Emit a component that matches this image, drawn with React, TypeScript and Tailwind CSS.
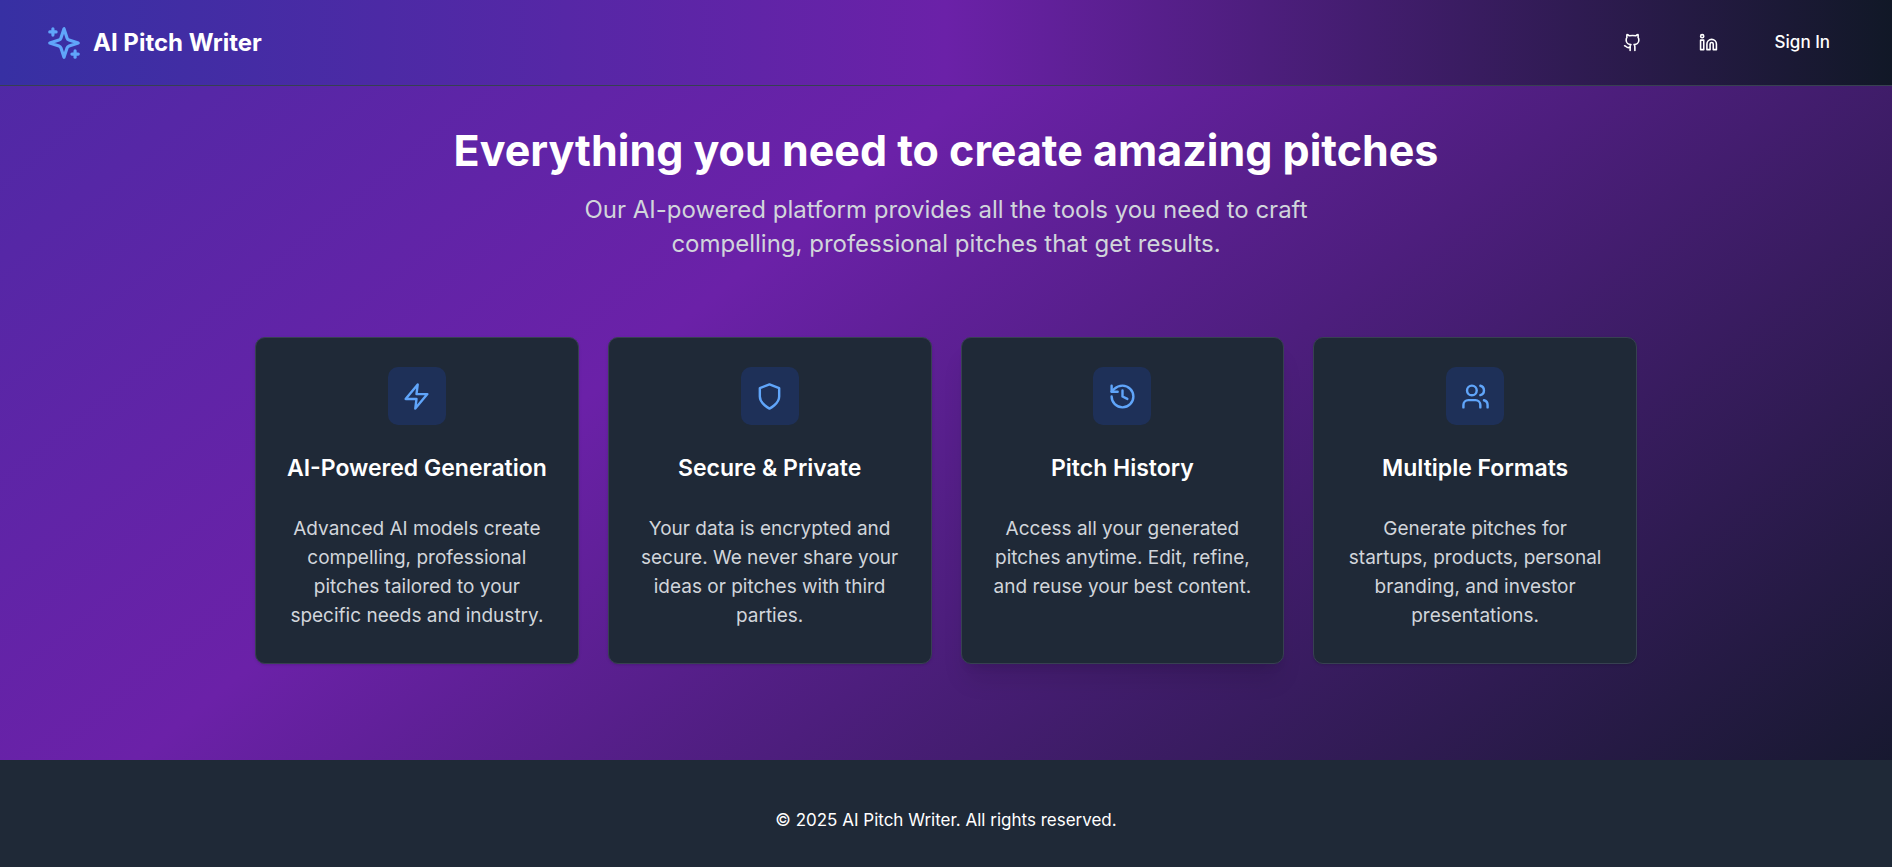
import type { ComponentType, ReactNode } from "react";
import { History, Users, Github, Linkedin } from "lucide-react";

interface IconProps {
  className?: string;
}

interface Feature {
  icon: ComponentType<IconProps>;
  title: string;
  text: string;
  raised?: boolean;
}

function LineIcon({ className, children }: IconProps & { children: ReactNode }) {
  return (
    <svg
      viewBox="0 0 24 24"
      className={className}
      fill="none"
      stroke="currentColor"
      strokeWidth="2"
      strokeLinecap="round"
      strokeLinejoin="round"
      aria-hidden="true"
    >
      {children}
    </svg>
  );
}

function Sparkles({ className }: IconProps) {
  return (
    <LineIcon className={className}>
      <path d="m12 3-1.912 5.813a2 2 0 0 1-1.275 1.275L3 12l5.813 1.912a2 2 0 0 1 1.275 1.275L12 21l1.912-5.813a2 2 0 0 1 1.275-1.275L21 12l-5.813-1.912a2 2 0 0 1-1.275-1.275L12 3Z" />
      <path d="M5 3v4" />
      <path d="M19 17v4" />
      <path d="M3 5h4" />
      <path d="M17 19h4" />
    </LineIcon>
  );
}

function Bolt({ className }: IconProps) {
  return (
    <LineIcon className={className}>
      <polygon points="13 2 3 14 12 14 11 22 21 10 12 10 13 2" />
    </LineIcon>
  );
}

function PlainShield({ className }: IconProps) {
  return (
    <LineIcon className={className}>
      <path d="M12 22s8-4 8-10V5l-8-3-8 3v7c0 6 8 10 8 10" />
    </LineIcon>
  );
}

const features: Feature[] = [
  {
    icon: Bolt,
    title: "AI-Powered Generation",
    text: "Advanced AI models create compelling, professional pitches tailored to your specific needs and industry.",
  },
  {
    icon: PlainShield,
    title: "Secure & Private",
    text: "Your data is encrypted and secure. We never share your ideas or pitches with third parties.",
  },
  {
    icon: History,
    title: "Pitch History",
    text: "Access all your generated pitches anytime. Edit, refine, and reuse your best content.",
    raised: true,
  },
  {
    icon: Users,
    title: "Multiple Formats",
    text: "Generate pitches for startups, products, personal branding, and investor presentations.",
  },
];

function Header() {
  return (
    <header className="border-b border-[#374151] bg-linear-to-r/srgb from-[#3730a3] via-[#6b21a8] to-[#111827]">
      <div className="flex items-center justify-between py-[19px] pr-[43px] pl-[45px]">
        <a href="#home" className="flex items-center gap-[10px]">
          <Sparkles className="size-[38px] text-[#60a5fa]" />
          <span className="text-2xl font-bold">AI Pitch Writer</span>
        </a>
        <nav className="flex items-center gap-[19px] text-[17px] leading-[25px] font-medium">
          <a href="#github" aria-label="GitHub" className="px-[19px] py-3">
            <Github className="size-[19px]" />
          </a>
          <a href="#linkedin" aria-label="LinkedIn" className="px-[19px] py-3">
            <Linkedin className="size-[19px]" />
          </a>
          <button type="button" className="px-[19px] py-[11px]">
            Sign In
          </button>
        </nav>
      </div>
    </header>
  );
}

function FeatureCard({ icon: Icon, title, text, raised }: Feature) {
  return (
    <article
      className={`flex flex-col items-center rounded-[10px] border border-[#374151] bg-[#1f2937] px-[29px] pt-[29px] pb-[33px] text-center ${
        raised ? "shadow-xl" : "shadow-sm"
      }`}
    >
      <div className="flex size-[58px] items-center justify-center rounded-[10px] bg-[#1e3058]">
        <Icon className="size-[29px] text-[#60a5fa]" />
      </div>
      <h3 className="mt-7 text-[23px] leading-[30px] font-semibold">{title}</h3>
      <p className="mt-[31px] text-[19px] leading-[29px] text-[#d1d5db]">{text}</p>
    </article>
  );
}

export default function App() {
  return (
    <div className="flex min-h-screen flex-col bg-linear-to-br/srgb from-[#3730a3] via-[#6b21a8] to-[#111827] bg-[length:100%_1514px] bg-bottom bg-no-repeat font-['Inter',sans-serif] text-white">
      <Header />
      <main className="px-6 pt-10 pb-24">
        <div className="mx-auto flex max-w-[1382px] flex-col gap-[76px]">
          <div className="mx-auto text-center">
            <h2 className="text-[43px] leading-[48px] font-bold">
              Everything you need to create amazing pitches
            </h2>
            <p className="mx-auto mt-[19px] max-w-[806px] text-2xl leading-[34px] text-[#d1d5db]">
              Our AI-powered platform provides all the tools you need to craft compelling, professional pitches that
              get results.
            </p>
          </div>
          <div className="grid gap-[29px] md:grid-cols-2 xl:grid-cols-4">
            {features.map((feature) => (
              <FeatureCard key={feature.title} {...feature} />
            ))}
          </div>
        </div>
      </main>
      <footer className="grow bg-[#1f2937] px-6 pt-12 pb-8 text-center text-[17px] leading-6">
        <p>© 2025 AI Pitch Writer. All rights reserved.</p>
      </footer>
    </div>
  );
}
